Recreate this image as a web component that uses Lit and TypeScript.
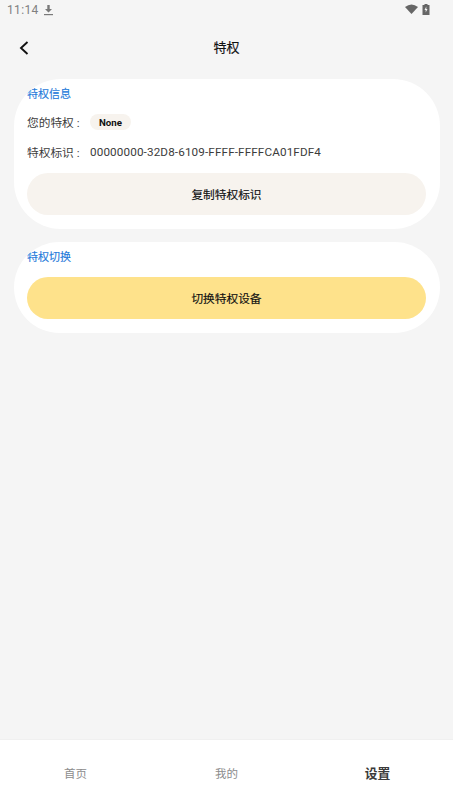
import { LitElement, html, css } from "lit";
import { customElement } from "lit/decorators.js";

@customElement("app-root")
export class AppRoot extends LitElement {
  static styles = css`
    :host {
      display: flex;
      flex-direction: column;
      width: 453px;
      height: 807px;
      background: #f5f5f5;
      font-family: Roboto, "Noto Sans CJK SC", sans-serif;
      color: #111;
      overflow: hidden;
    }
    .status {
      height: 20px;
      display: flex;
      align-items: center;
      padding: 0 23px 0 7px;
      color: #808080;
      font-size: 12px;
      letter-spacing: 0.35px;
    }
    .status .dl { margin-left: 4px; display: block; }
    .status .spacer { flex: 1; }
    .status .wifi { display: block; position: relative; top: -1px; }
    .status .bat { display: block; margin-left: 4px; position: relative; top: -1px; }
    .nav {
      height: 59px;
      display: flex;
      align-items: center;
      position: relative;
      justify-content: center;
      flex: none;
    }
    .back { position: absolute; left: 17px; top: 20px; display: block; }
    .nav h1 {
      margin: 0 0 3px;
      font-size: 13px;
      font-weight: 400;
      line-height: 18px;
      -webkit-text-stroke: 0.15px #111;
    }
    .content {
      flex: 1;
      padding: 0 13.5px;
      display: flex;
      flex-direction: column;
      gap: 13px;
    }
    .card {
      background: #fff;
      border-radius: 47px;
      overflow: hidden;
      padding: 8px 13.5px 14px;
    }
    .sec {
      font-size: 11px;
      line-height: 16px;
      color: #1f7ada;
      -webkit-text-stroke: 0.15px #1f7ada;
    }
    .row {
      display: flex;
      align-items: center;
      font-size: 11.7px;
      color: #3c3c3c;
    }
    .row .k { width: 63px; flex: none; white-space: nowrap; padding-bottom: 2px; }
    .r1 { height: 20px; margin-top: 9px; }
    .r2 { height: 20px; margin-top: 10px; }
    .chip {
      background: #f7f3ee;
      border-radius: 8px;
      height: 16px;
      padding: 0 9px;
      display: flex;
      align-items: center;
      font-size: 9.7px;
      font-weight: 700;
      color: #111;
    }
    .uid { font-size: 11.7px; color: #3c3c3c; letter-spacing: 0.13px; }
    .btn {
      height: 42px;
      box-sizing: border-box;
      padding-bottom: 2px;
      border-radius: 21px;
      display: flex;
      align-items: center;
      justify-content: center;
      font-size: 11.7px;
      font-weight: 400;
      color: #111;
      -webkit-text-stroke: 0.15px #111;
    }
    .copy { background: #f7f3ee; margin-top: 11px; }
    .switch { background: #fee28b; margin-top: 11px; }
    .tabs {
      height: 68px;
      flex: none;
      background: #fff;
      border-top: 1px solid #f0f0f0;
      box-sizing: border-box;
      padding-bottom: 2px;
      display: grid;
      grid-template-columns: repeat(3, 1fr);
      align-items: center;
      font-size: 11.5px;
      color: #8c8c8c;
      text-align: center;
    }
    .tabs .on { font-size: 12.8px; font-weight: 700; color: #3a3a3a; }
  `;

  render() {
    return html`
      <div class="status">
        <span>11:14</span>
        <svg class="dl" width="11" height="12" viewBox="0 0 11 12">
          <path d="M4.3 1h2.4v4h2.3L5.5 8.6 2 5h2.3z" fill="#7a7a7a" />
          <rect x="1" y="10" width="9" height="1.2" fill="#7a7a7a" />
        </svg>
        <span class="spacer"></span>
        <svg class="wifi" width="13" height="10" viewBox="0 0 13 10">
          <path d="M0 3 Q6.5 -2 13 3 L6.5 10z" fill="#666" />
        </svg>
        <svg class="bat" width="8" height="11" viewBox="0 0 8 11">
          <path d="M2.5 0h3v1H7.500v10H.5V1H2.500z" fill="#666" />
          <path d="M4.300 2.600 2.500 6h1.200v2.600L5.500 5H4.300z" fill="#f5f5f5" />
        </svg>
      </div>
      <div class="nav">
        <svg class="back" width="14" height="16" viewBox="0 0 14 16">
          <path d="M10.5 2 4 8l6.500 6" fill="none" stroke="#111" stroke-width="1.900" />
        </svg>
        <h1>特权</h1>
      </div>
      <div class="content">
        <section class="card">
          <div class="sec">特权信息</div>
          <div class="row r1">
            <span class="k">您的特权 :</span><span class="chip">None</span>
          </div>
          <div class="row r2">
            <span class="k">特权标识 :</span><span class="uid">00000000-32D8-6109-FFFF-FFFFCA01FDF4</span>
          </div>
          <div class="btn copy">复制特权标识</div>
        </section>
        <section class="card">
          <div class="sec">特权切换</div>
          <div class="btn switch">切换特权设备</div>
        </section>
      </div>
      <div class="tabs">
        <span>首页</span><span>我的</span><span class="on">设置</span>
      </div>
    `;
  }
}
